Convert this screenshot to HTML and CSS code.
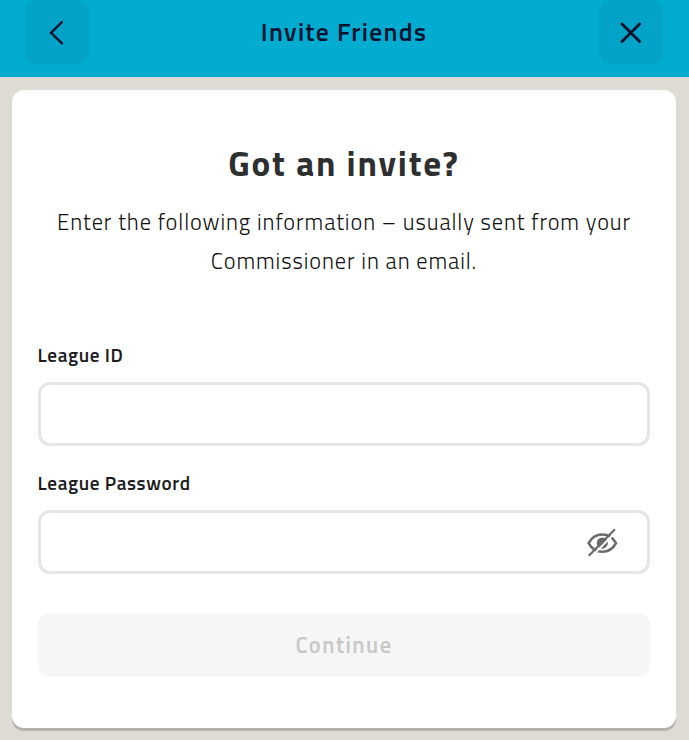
FILE: index.html
```html
<!DOCTYPE html>
<html lang="en">
<head>
    <meta charset="UTF-8">
    <meta name="viewport" content="width=device-width, initial-scale=1.0">
    <title>Invite Friends</title>
    <link rel="stylesheet" href="styles.css">
</head>
<body>
    <header class="top-bar">
        <button class="icon-btn" type="button" aria-label="Back">
            <svg width="64" height="64" viewBox="0 0 64 64">
                <path d="M37 22 L26 32.8 L37 43.4" />
            </svg>
        </button>
        <h1 class="top-title">Invite Friends</h1>
        <button class="icon-btn close" type="button" aria-label="Close">
            <svg width="64" height="64" viewBox="0 0 64 64">
                <path d="M23 24 L40.6 41.4 M40.6 24 L23 41.4" />
            </svg>
        </button>
    </header>

    <main class="card">
        <h2 class="card-title">Got an invite?</h2>
        <p class="intro">
            Enter the following information – usually sent from your<br>
            Commissioner in an email.
        </p>

        <form class="invite-form">
            <div class="field">
                <label for="leagueId">League ID</label>
                <div class="input-box">
                    <input type="text" id="leagueId">
                </div>
            </div>
            <div class="field">
                <label for="leaguePassword">League Password</label>
                <div class="input-box">
                    <input type="password" id="leaguePassword">
                    <button class="toggle" type="button" aria-label="Show password">
                        <svg width="32" height="30" viewBox="0 0 32 30">
                            <circle class="pupil" cx="16.3" cy="16.1" r="5.6" />
                            <path class="eye" d="M2.6 16.1 C8.8 4.6 23.8 4.6 30 16.1 C23.8 27.6 8.8 27.6 2.6 16.1 Z" />
                            <path class="gap" d="M5 30.2 L30.8 4" />
                            <path class="slash" d="M2.8 28.7 L29 2.3" />
                        </svg>
                    </button>
                </div>
            </div>
            <button class="continue" type="submit" disabled>Continue</button>
        </form>
    </main>
</body>
</html>
```
FILE: styles.css
```css
* {
    box-sizing: border-box;
}

body {
    margin: 0;
    min-height: 740px;
    background-color: #dedbd4;
    color: #1c1c1e;
    font-family: "Titillium Web", Roboto, sans-serif;
}

button {
    padding: 0;
    border: none;
    font-family: inherit;
}

.top-bar {
    display: flex;
    justify-content: space-between;
    height: 77px;
    padding: 0 26px 0 25px;
    background-color: #02abd0;
}

.icon-btn {
    width: 64px;
    height: 64px;
    border-radius: 12px;
    background-color: #02a3c6;
}

.icon-btn svg {
    display: block;
    fill: none;
    stroke: #03122e;
    stroke-width: 2.4;
    stroke-linecap: round;
}

.icon-btn.close svg {
    stroke-width: 2.8;
}

.top-title {
    margin: 0;
    color: #03122e;
    font-size: 25.6px;
    font-weight: 600;
    line-height: 64px;
    letter-spacing: 1.28px;
}

.card {
    height: 638px;
    margin: 13px 13px 0 12px;
    padding: 48px 25.6px 0;
    border-radius: 12px;
    background-color: #fff;
    box-shadow: 0 3px 0 #b3b1ab;
}

.card-title {
    margin: 0;
    color: #2e2f30;
    font-size: 35.2px;
    font-weight: 700;
    line-height: 50px;
    letter-spacing: 1.76px;
    text-align: center;
}

.intro {
    margin: 15px 0 0;
    color: #111;
    font-size: 22.4px;
    font-weight: 300;
    line-height: 38.5px;
    letter-spacing: 0.9px;
    text-align: center;
    white-space: nowrap;
}

.invite-form {
    margin-top: 60px;
}

.field {
    height: 128px;
}

.field label {
    display: block;
    height: 42px;
    font-size: 19.2px;
    font-weight: 600;
    line-height: 30px;
    letter-spacing: 0.6px;
}

.input-box {
    display: flex;
    align-items: center;
    height: 64px;
    border: 3px solid #e6e6e6;
    border-radius: 12px;
}

.input-box input {
    flex: 1;
    min-width: 0;
    height: 100%;
    padding: 0 20px;
    border: none;
    outline: none;
    background: none;
    font: inherit;
    font-size: 22px;
}

.toggle {
    width: 32px;
    height: 30px;
    margin-right: 29px;
    background: none;
}

.toggle svg {
    display: block;
    fill: none;
    stroke: #6b6b6b;
    stroke-width: 2.6;
}

.toggle .pupil {
    fill: #6b6b6b;
    stroke: none;
}

.toggle .gap {
    stroke: #fff;
    stroke-width: 1.8;
}

.toggle .slash {
    stroke-width: 2.2;
}

.continue {
    display: block;
    width: 100%;
    height: 64px;
    margin-top: 17px;
    border-radius: 12px;
    background-color: #f6f6f6;
    color: #c8c8c8;
    font-size: 22.4px;
    font-weight: 600;
    letter-spacing: 1.5px;
}
```
